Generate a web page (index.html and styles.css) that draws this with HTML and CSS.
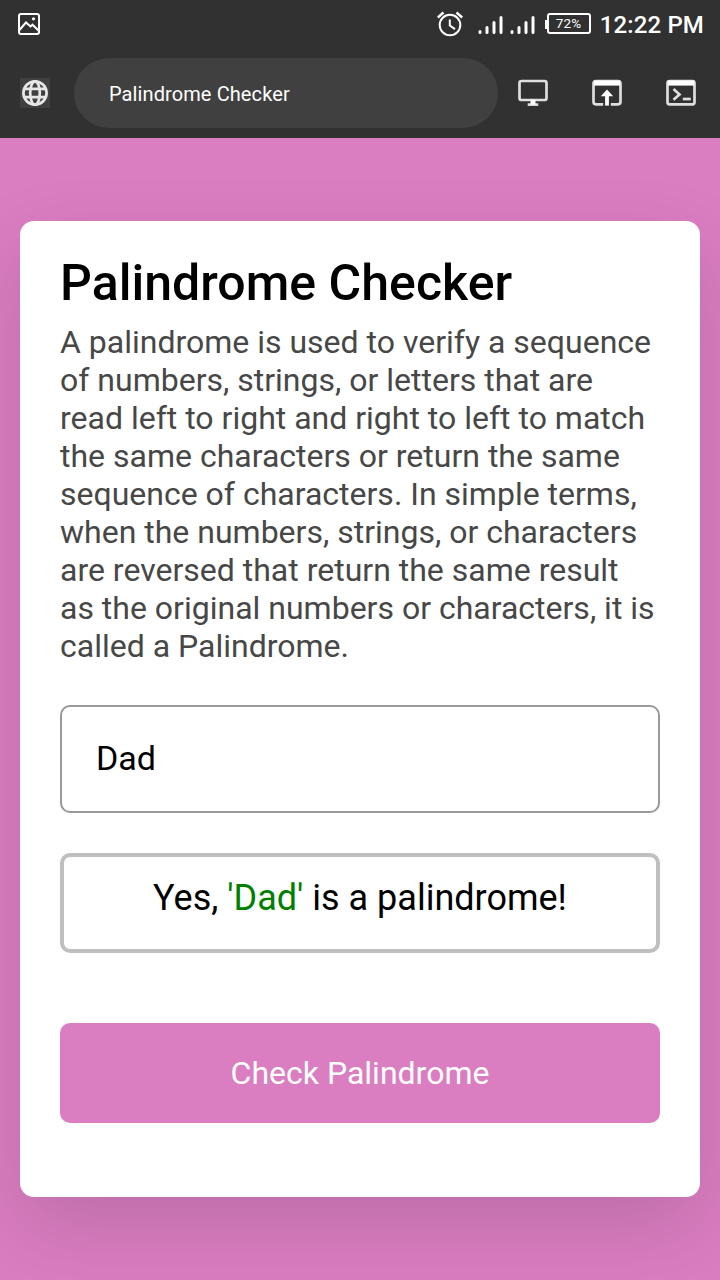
FILE: index.html
```html
<!DOCTYPE html>
<html lang="en">
<head>
<meta charset="utf-8">
<title>Palindrome Checker</title>
<link rel="stylesheet" href="styles.css">
</head>
<body>
<header class="chrome">
  <div class="status">
    <svg class="icon-photo" width="24" height="24" viewBox="0 0 24 24" fill="none" stroke="#fff" stroke-width="2"><rect x="2" y="2" width="20" height="20" rx="2"/><path d="M2 18.5l7-8 4.5 4 2-1.8 6.5 6.3"/><circle cx="16.5" cy="6.8" r="1.6" fill="#fff" stroke="none"/></svg>
    <div class="status-right">
      <svg class="icon-alarm" width="28" height="28" viewBox="0 0 28 28" fill="none" stroke="#fff" stroke-width="2"><circle cx="14" cy="15" r="10.3"/><path d="M1.8 7.5l5.7-5M26.2 7.5l-5.7-5" stroke-width="2.4"/><path d="M13.8 9.5v6l5.2 3.6"/></svg>
      <svg class="icon-signal" width="58" height="22" viewBox="0 0 58 22" stroke="#fff" stroke-width="3" stroke-linecap="round"><path d="M2 17.5v1M9 13.5v5M16 8.5v10M23 3.5v15M34 17.5v1M41 13.5v5M48 8.5v10M55 3.5v15"/></svg>
      <div class="battery"><span class="battery-tip"></span><span class="battery-body">72%</span></div>
      <span class="clock">12:22 PM</span>
    </div>
  </div>
  <div class="toolbar">
    <span class="site"><svg width="30" height="30" viewBox="0 0 30 30" fill="none" stroke="#e6e6e6" stroke-width="2.7"><circle cx="15" cy="15" r="11.6"/><ellipse cx="15" cy="15" rx="4.8" ry="11.6"/><path d="M4.3 10.8h21.4M4.3 19.2h21.4"/></svg></span>
    <div class="address">Palindrome Checker</div>
    <div class="actions">
      <svg width="32" height="30" viewBox="0 0 32 30" fill="none" stroke="#dedede" stroke-width="2.7"><rect x="2.5" y="3" width="27" height="19" rx="2"/><path d="M10.7 26.6h10.6"/><path d="M16 21.6v5" stroke="#fff" stroke-width="5"/></svg>
      <svg width="32" height="30" viewBox="0 0 32 30" fill="none" stroke="#dedede" stroke-width="2.7"><path d="M12.2 26.3H5a2.5 2.5 0 0 1-2.5-2.5V5.5A2.5 2.5 0 0 1 5 3h22a2.5 2.5 0 0 1 2.5 2.5v18.3a2.5 2.5 0 0 1-2.5 2.5h-7.2"/><path d="M3 5.1h26" stroke="#fff" stroke-width="5"/><path d="M16 27.6V16.6" stroke="#fff" stroke-width="3.8"/><path d="M9.8 18.2l6.2-6.7 6.2 6.7z" fill="#fff" stroke="none"/></svg>
      <svg width="32" height="30" viewBox="0 0 32 30" fill="none" stroke="#dedede" stroke-width="2.7"><rect x="2.5" y="3" width="27" height="23.3" rx="2"/><path d="M3 5.1h26" stroke="#fff" stroke-width="5"/><path d="M8.5 11l6 5.4-6 5.4"/><path d="M17.8 21h8"/></svg>
    </div>
  </div>
</header>
<main class="page">
  <section class="card">
    <h1 class="title">Palindrome Checker</h1>
    <p class="intro">A palindrome is used to verify a sequence<br>of numbers, strings, or letters that are<br>read left to right and right to left to match<br>the same characters or return the same<br>sequence of characters. In simple terms,<br>when the numbers, strings, or characters<br>are reversed that return the same result<br>as the original numbers or characters, it is<br>called a Palindrome.</p>
    <input class="field" type="text" value="Dad" aria-label="Text to check">
    <p class="result">Yes, <span class="word">'Dad'</span> is a palindrome!</p>
    <button class="check" type="button">Check Palindrome</button>
  </section>
</main>
</body>
</html>
```
FILE: styles.css
```css
* { box-sizing: border-box; }

body {
  margin: 0;
  height: 1280px;
  display: flex;
  flex-direction: column;
  overflow: hidden;
  background: #da7dc1;
  font-family: Roboto, sans-serif;
}

svg { display: block; }

.chrome { position: relative; z-index: 1; height: 138px; background: #313131; color: #fff; }

.status {
  height: 48px;
  padding: 0 16px 0 17px;
  display: flex;
  align-items: center;
  justify-content: space-between;
}
.status-right { display: flex; align-items: center; }
.icon-alarm { margin-right: 14px; }
.icon-signal { margin: 2px 9px 0 0; }
.battery { display: flex; align-items: center; }
.battery-tip { width: 2px; height: 9px; background: #fff; }
.battery-body {
  width: 44px;
  height: 21px;
  margin: 0 9px 1px 0;
  border: 2px solid #fff;
  border-radius: 3px;
  font-size: 13.5px;
  line-height: 17px;
  letter-spacing: 0.2px;
  text-align: center;
}
.clock { padding-top: 2px; font-size: 24px; font-weight: 500; line-height: 46px; letter-spacing: 0.15px; white-space: nowrap; }

.toolbar { height: 90px; padding: 10px 23px 10px 20px; display: flex; align-items: center; }
.site { background: #404040; }
.address {
  width: 424px;
  height: 70px;
  margin-left: 24px;
  padding: 1px 35px 0;
  border-radius: 35px;
  background: #404040;
  font-size: 20px;
  line-height: 70px;
  letter-spacing: 0.1px;
}
.actions { margin-left: 19px; display: flex; gap: 42px; }

.page { padding: 83px 20px; }

.card {
  height: 976px;
  padding: 32px 40px 0;
  display: flex;
  flex-direction: column;
  border-radius: 14px;
  background: #fff;
  box-shadow: 0 30px 80px rgba(0, 0, 0, 0.13);
}
.title { margin: 0; font-size: 50px; font-weight: 500; line-height: 60px; letter-spacing: 0.03px; white-space: nowrap; }
.intro {
  margin: 10px 0 40px;
  color: #474747;
  font-size: 32px;
  line-height: 38px;
  white-space: nowrap;
}
.field {
  width: 100%;
  height: 108px;
  padding: 0 34px 2px;
  border: 2px solid #999;
  border-radius: 10px;
  outline: none;
  background: #fff;
  color: #000;
  font: 34px Roboto, sans-serif;
}
.result {
  height: 100px;
  margin: 40px 0 70px;
  padding-top: 20px;
  border: 4px solid #bfbfbf;
  border-radius: 10px;
  font-size: 36px;
  line-height: 42px;
  text-align: center;
}
.word { color: green; }
.check {
  height: 100px;
  padding: 0;
  border: 0;
  border-radius: 10px;
  background: #da7dc1;
  color: #fff;
  font: 32px Roboto, sans-serif;
}
```
